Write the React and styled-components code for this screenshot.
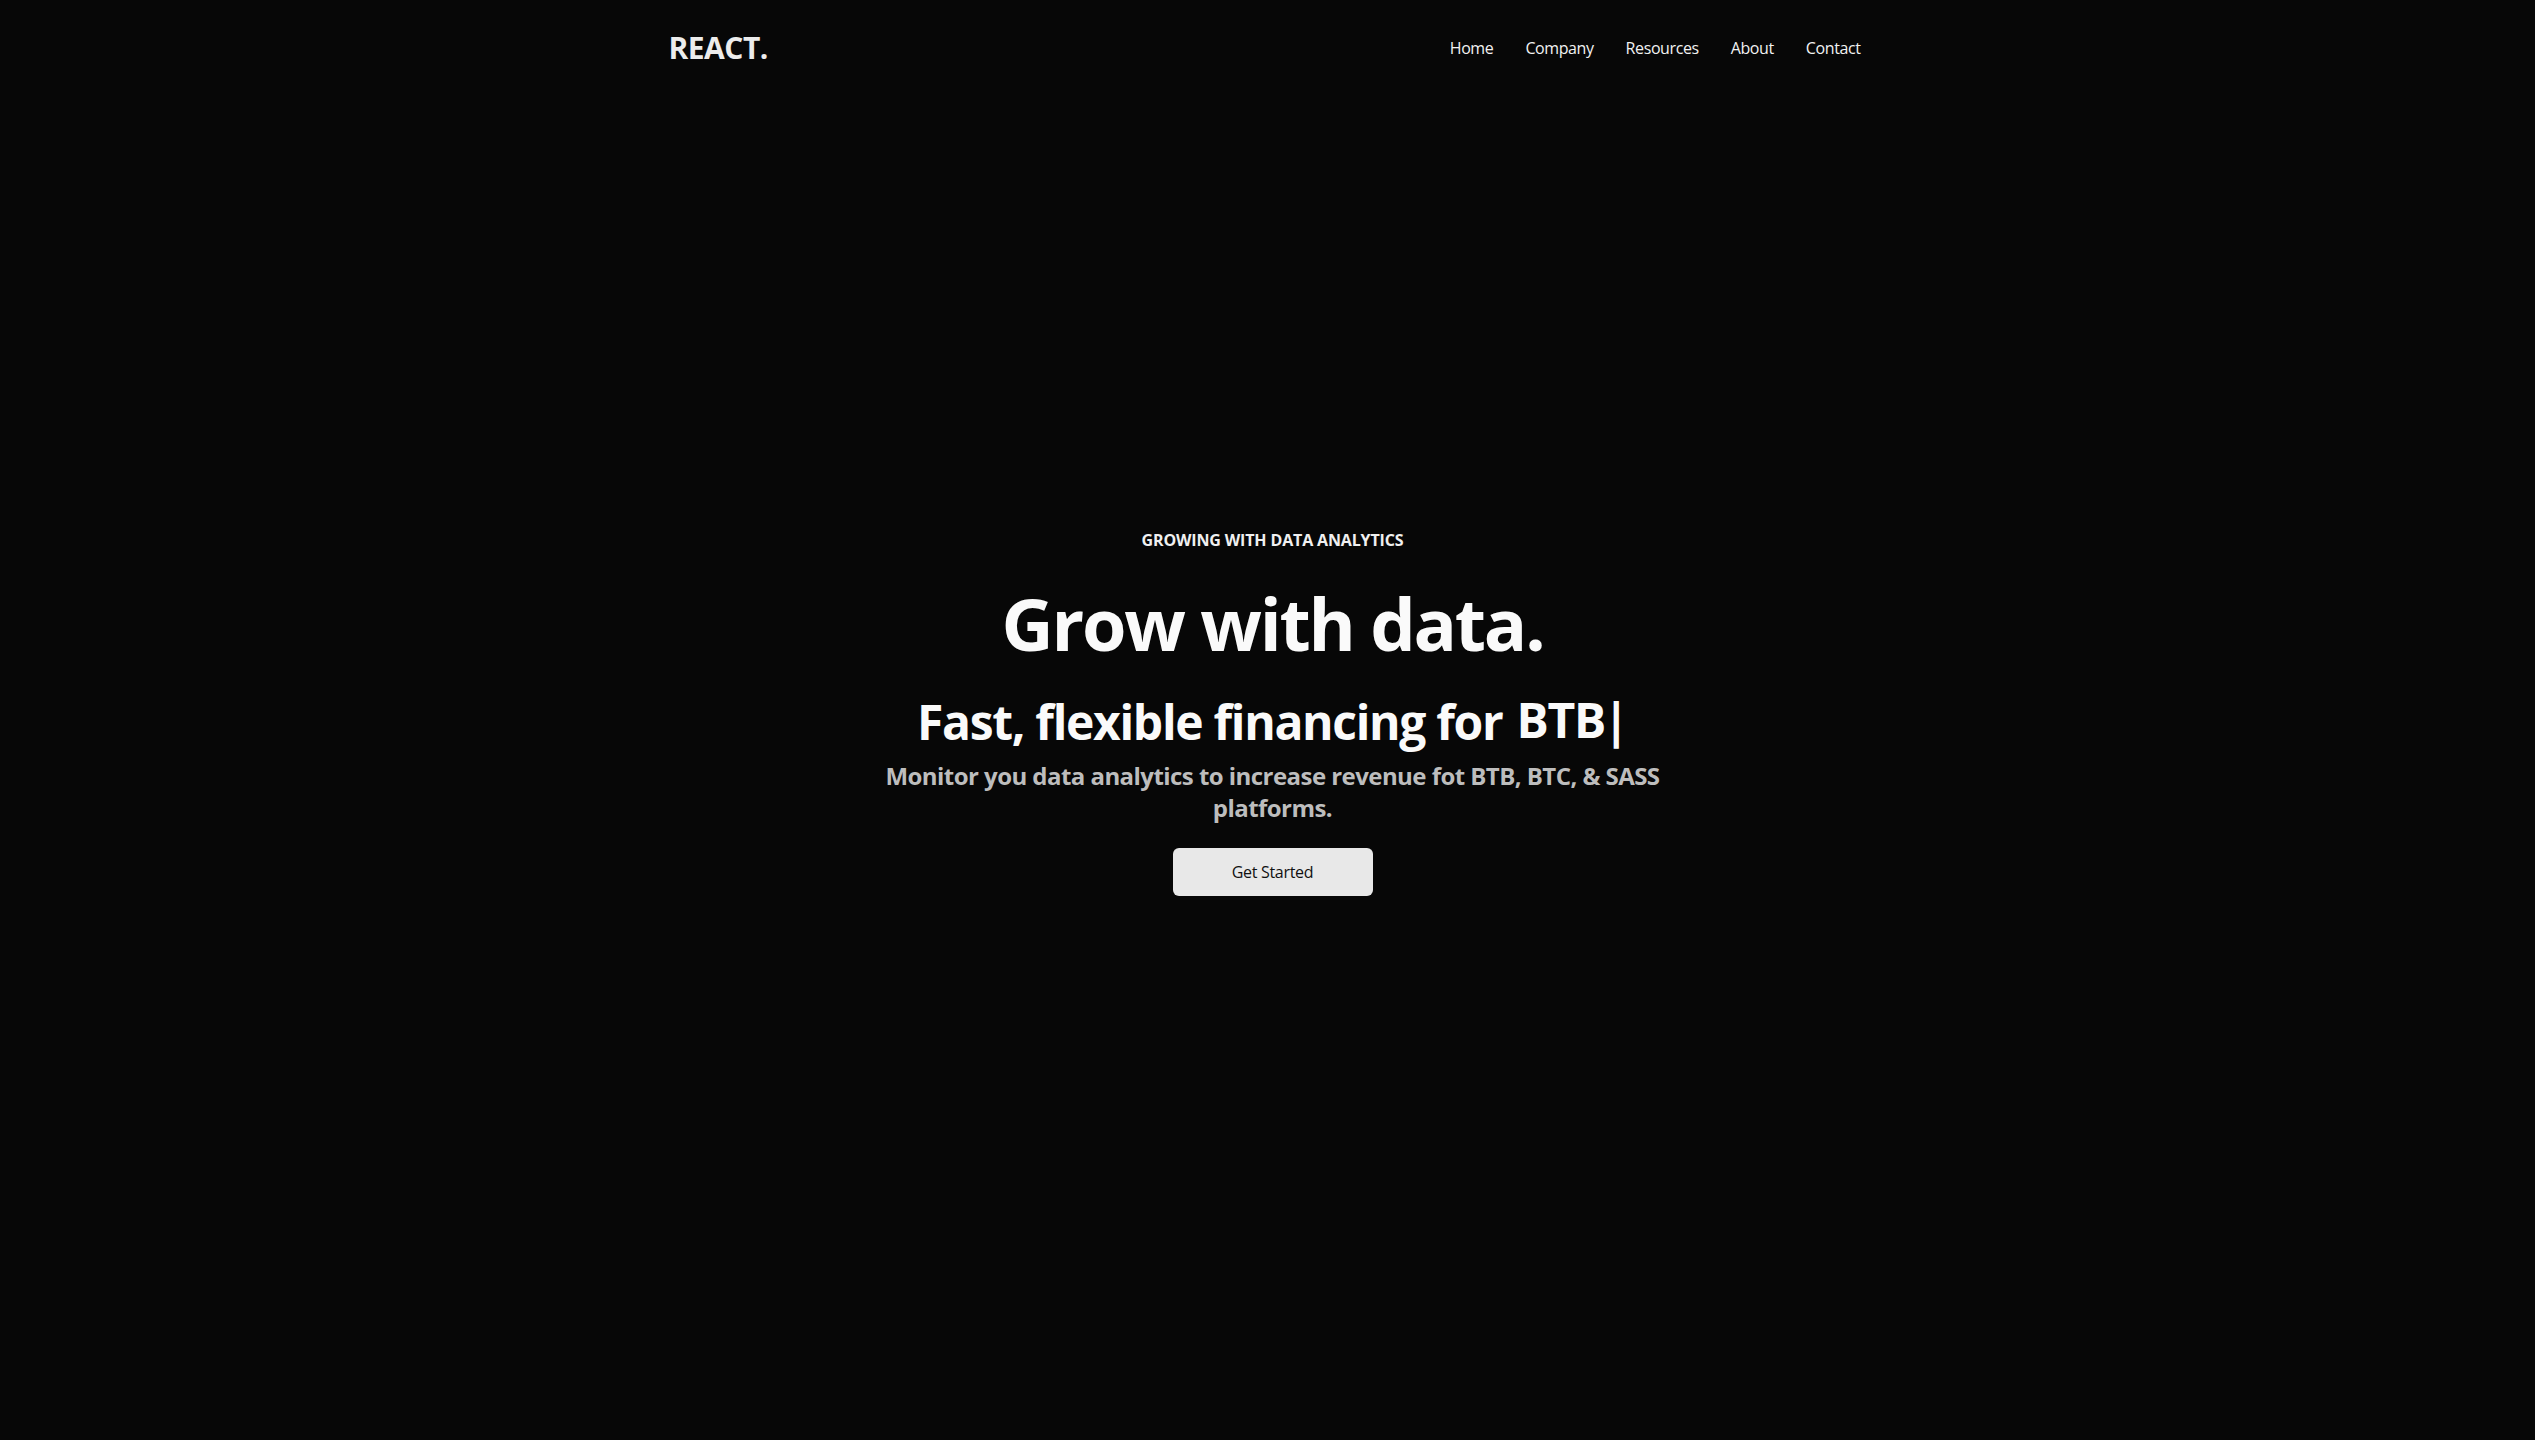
import React from 'react';
import styled, { createGlobalStyle } from 'styled-components';

const Global = createGlobalStyle`
  * { box-sizing: border-box; margin: 0; padding: 0; }
  html, body { background: #070707; }
  body {
    font-family: "Open Sans", "Noto Sans", sans-serif;
    color: #f5f5f5;
    -webkit-font-smoothing: antialiased;
  }
`;

const Page = styled.div`
  min-height: 100vh;
  background: #070707;
  color: #f5f5f5;
  padding-left: 10px;
`;

const NavBar = styled.nav`
  display: flex;
  justify-content: space-between;
  align-items: center;
  height: 96px;
  max-width: 1240px;
  margin: 0 auto;
  padding: 0 16px;
  position: relative;
  z-index: 2;
`;

const Logo = styled.h1`
  width: 100%;
  font-size: 30px;
  line-height: 36px;
  font-weight: 700;
  color: #ececec;
  letter-spacing: -0.5px;
`;

const NavList = styled.ul`
  display: flex;
  list-style: none;
`;

const NavItem = styled.li`
  padding: 16px;
  font-size: 16px;
  line-height: 24px;
  color: #f2f2f2;
  white-space: nowrap;
  letter-spacing: -0.4px;
`;

const Hero = styled.section`
  max-width: 800px;
  width: 100%;
  height: 100vh;
  margin: -96px auto 0;
  text-align: center;
  display: flex;
  flex-direction: column;
  justify-content: center;
`;

const Eyebrow = styled.p`
  font-weight: 700;
  font-size: 16px;
  line-height: 24px;
  padding: 8px;
  color: #f0f0f0;
  letter-spacing: -0.15px;
`;

const Title = styled.h1`
  font-size: 72px;
  line-height: 1;
  font-weight: 700;
  padding: 27px 0 21px;
  color: #fafafa;
  letter-spacing: -2.2px;
`;

const TaglineRow = styled.div`
  display: flex;
  justify-content: center;
  align-items: center;
`;

const Tagline = styled.p`
  font-size: 48px;
  line-height: 1;
  font-weight: 700;
  padding: 18px 0 14px;
  color: #fafafa;
  letter-spacing: -1.3px;
`;

const Typed = styled.span`
  font-size: 48px;
  line-height: 1;
  font-weight: 700;
  padding-left: 14px;
  color: #fafafa;
  letter-spacing: -1.3px;
`;

const Cursor = styled.span`
  font-weight: 700;
  margin-left: -2px;
`;

const Lead = styled.p`
  font-size: 24px;
  line-height: 32px;
  font-weight: 700;
  color: #bdbdbd;
  letter-spacing: -0.55px;
`;

const CTA = styled.button`
  background: #e8e8e8;
  width: 200px;
  border: none;
  border-radius: 6px;
  font-family: inherit;
  font-weight: 500;
  font-size: 16px;
  line-height: 24px;
  margin: 24px auto;
  padding: 12px 0;
  color: #111;
  cursor: pointer;
  letter-spacing: -0.3px;
`;

const links = ['Home', 'Company', 'Resources', 'About', 'Contact'];

export default function App() {
  return (
    <Page>
      <Global />
      <NavBar>
        <Logo>REACT.</Logo>
        <NavList>
          {links.map((l) => (
            <NavItem key={l}>{l}</NavItem>
          ))}
        </NavList>
      </NavBar>
      <Hero>
        <Eyebrow>GROWING WITH DATA ANALYTICS</Eyebrow>
        <Title>Grow with data.</Title>
        <TaglineRow>
          <Tagline>Fast, flexible financing for</Tagline>
          <Typed>
            BTB<Cursor>|</Cursor>
          </Typed>
        </TaglineRow>
        <Lead>Monitor you data analytics to increase revenue fot BTB, BTC, &amp; SASS platforms.</Lead>
        <CTA>Get Started</CTA>
      </Hero>
    </Page>
  );
}
